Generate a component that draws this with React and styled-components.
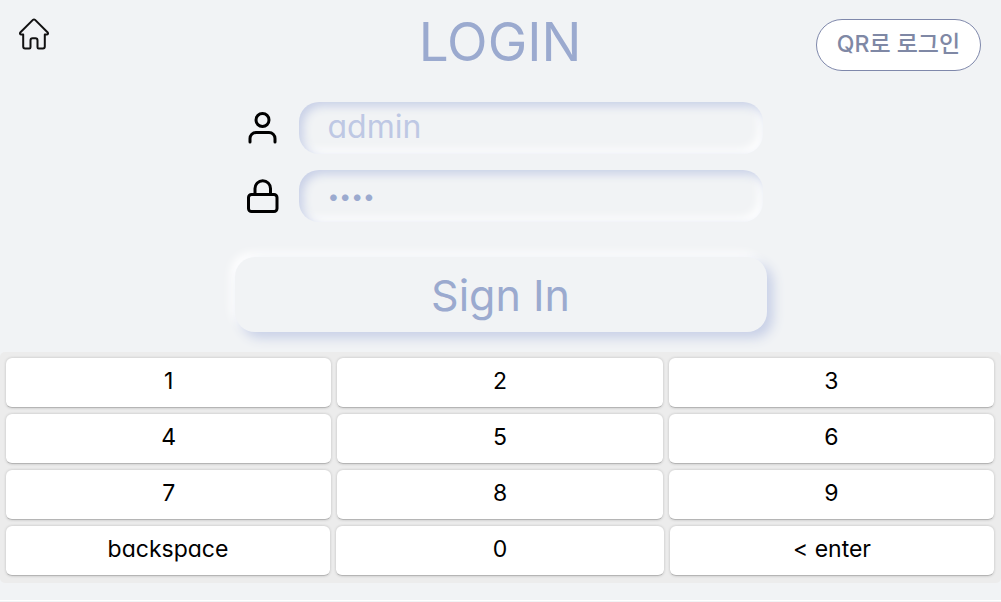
import React from "react";
import styled, { createGlobalStyle } from "styled-components";

const GlobalStyle = createGlobalStyle`
  *, *::before, *::after { box-sizing: border-box; }
  body {
    margin: 0;
    background: #f1f3f5;
    font-family: Inter, "Noto Sans CJK KR", sans-serif;
    font-feature-settings: "cv11";
  }
  button, input { font: inherit; font-feature-settings: inherit; }
`;

const Page = styled.div`
  display: flex;
  flex-direction: column;
  min-height: 100vh;
`;

const Header = styled.header`
  display: grid;
  grid-template-columns: 1fr auto 1fr;
  align-items: start;
  padding: 12px 20px 0 19px;
`;

const HomeLink = styled.a`
  display: block;
  width: 30px;
  height: 32px;
  margin-top: 6px;
  color: #111;

  svg { display: block; }
`;

const Title = styled.h1`
  margin: 0;
  color: #9baacf;
  font-size: 53px;
  font-weight: 400;
  line-height: 60px;
`;

const QrButton = styled.button`
  justify-self: end;
  width: 165px;
  height: 52px;
  margin-top: 7px;
  padding: 0 0 6px;
  border: 1px solid #7f88ab;
  border-radius: 26px;
  background: #fff;
  color: #7f88a5;
  font-size: 23px;
  font-weight: 500;
  white-space: nowrap;
`;

const Form = styled.form`
  display: flex;
  flex-direction: column;
  gap: 16px;
  width: 532px;
  max-width: 100%;
  margin: 30px auto 20px;
`;

const Field = styled.label`
  display: flex;
  align-items: center;
  gap: 17px;
  padding: 0 4px 0 9px;

  svg { flex: none; }
`;

const TextInput = styled.input`
  flex: 1;
  min-width: 0;
  height: 52px;
  padding: 0 29px 4px;
  border: 0;
  border-radius: 20px;
  outline: 0;
  background: none;
  box-shadow: inset 4px 4px 10px #c8d0e7, inset -4px -4px 10px #fff;
  color: #9baacf;
  font-size: 32px;

  &::placeholder { color: #bec8e4; opacity: 1; }
  &[type="password"] { padding-bottom: 0; font-size: 21px; }
`;

const SubmitButton = styled.button`
  height: 75px;
  margin-top: 19px;
  border: 0;
  border-radius: 20px;
  background: #f1f3f5;
  box-shadow: 6px 6px 12px #c8d0e7, -4px -4px 10px #fff;
  color: #9baacf;
  font-size: 43px;
`;

const Keyboard = styled.div`
  display: flex;
  flex-direction: column;
  gap: 6px;
  padding: 6px 7px 7px 6px;
  border-radius: 5px;
  background: #ececec;
`;

const KeyRow = styled.div`
  display: flex;
  gap: 6px;
`;

const Key = styled.button`
  flex: 1 1 ${({ $basis }) => $basis || "0"};
  height: 50px;
  padding: 0 0 4px;
  border: 0;
  border-bottom: 1px solid #b5b5b5;
  border-radius: 6px;
  background: #fff;
  box-shadow: 0 0 3px rgba(0, 0, 0, 0.2);
  color: #000;
  font-size: 23px;
`;

const Footer = styled.footer`
  margin-top: auto;
  height: 2px;
  border-top: 1px solid #fff;
`;

const KEYS = [
  ["1", "2", "3"],
  ["4", "5", "6"],
  ["7", "8", "9"],
  ["backspace", "0", "< enter"],
];

function HomeIcon() {
  return (
    <svg width="30" height="32" viewBox="0 0 30 32" fill="none" stroke="currentColor" strokeWidth="2" strokeLinejoin="round" aria-hidden="true">
      <path d="M13.9 1.9 1.5 14.2c-1 1.1-.5 2.3.9 2.3h1.8v12c0 1.2.8 1.9 1.9 1.9h4.2c.8 0 1.2-.4 1.2-1.2v-6.6c0-1.5.8-2.3 2.1-2.3h2.8c1.3 0 2.1.8 2.1 2.3v6.6c0 .8.4 1.2 1.2 1.2h4.2c1.1 0 1.900-.7 1.900-1.900v-12h1.800c1.400 0 1.900-1.200.9-2.300L16.100 1.900c-.7-.7-1.500-.7-2.200 0Z" />
    </svg>
  );
}

function UserIcon() {
  return (
    <svg width="38" height="38" viewBox="0 0 38 38" fill="none" stroke="#000" strokeWidth="3" strokeLinecap="round" aria-hidden="true">
      <circle cx="18.500" cy="11" r="6.500" />
      <path d="M6 33v-3.500a6 6 0 0 1 6-6h13a6 6 0 0 1 6 6V33" />
    </svg>
  );
}

function LockIcon() {
  return (
    <svg width="38" height="38" viewBox="0 0 38 38" fill="none" stroke="#000" strokeWidth="3" strokeLinecap="round" strokeLinejoin="round" aria-hidden="true">
      <rect x="4.500" y="17.500" width="28.500" height="17" rx="3" />
      <path d="M11 17v-5.500a7.750 7.750 0 0 1 15.500 0V17" />
    </svg>
  );
}

export default function App() {
  return (
    <>
      <GlobalStyle />
      <Page>
        <Header>
          <HomeLink href="#" aria-label="Home">
            <HomeIcon />
          </HomeLink>
          <Title>LOGIN</Title>
          <QrButton type="button">QR로 로그인</QrButton>
        </Header>
        <Form onSubmit={(event) => event.preventDefault()}>
          <Field>
            <UserIcon />
            <TextInput type="text" placeholder="admin" aria-label="Username" />
          </Field>
          <Field>
            <LockIcon />
            <TextInput type="password" defaultValue="1234" aria-label="Password" />
          </Field>
          <SubmitButton type="submit">Sign In</SubmitButton>
        </Form>
        <Keyboard>
          {KEYS.map((row) => (
            <KeyRow key={row[0]}>
              {row.map((label) => (
                <Key key={label} type="button" $basis={label === "0" ? "4px" : undefined}>
                  {label}
                </Key>
              ))}
            </KeyRow>
          ))}
        </Keyboard>
        <Footer />
      </Page>
    </>
  );
}
